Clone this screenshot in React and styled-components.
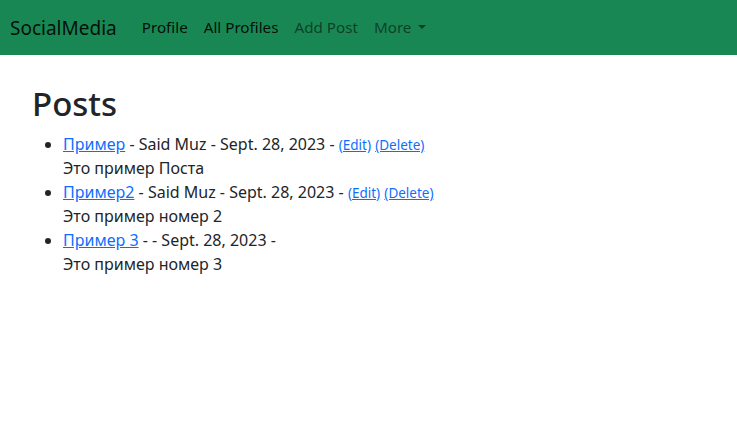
import React from 'react';
import styled, { createGlobalStyle } from 'styled-components';

const GlobalStyle = createGlobalStyle`
  body {
    margin: 0;
    font-family: "Noto Sans", "Open Sans", sans-serif;
    font-size: 16px;
    line-height: 1.5;
    color: #212529;
    background: #fff;
  }
`;

const Navbar = styled.nav`
  display: flex;
  align-items: center;
  height: 55px;
  padding: 0 10px;
  background-color: #198754;
`;

const Brand = styled.a`
  font-size: 19px;
  line-height: 30px;
  color: rgba(0, 0, 0, 0.9);
  text-decoration: none;
  margin-right: 17px;
`;

const NavList = styled.ul`
  display: flex;
  list-style: none;
  margin: 0;
  padding: 0;
`;

const NavLink = styled.a`
  display: block;
  padding: 8px;
  font-size: 15.2px;
  color: ${p => (p.$active ? 'rgba(0, 0, 0, 0.9)' : 'rgba(0, 0, 0, 0.55)')};
  text-decoration: none;
  cursor: pointer;

  &.dropdown::after {
    content: '';
    display: inline-block;
    margin-left: 7px;
    vertical-align: 0.255em;
    border-top: 0.3em solid;
    border-right: 0.3em solid transparent;
    border-left: 0.3em solid transparent;
  }
`;

const Main = styled.main`
  padding: 29px 32px 0;
`;

const Title = styled.h1`
  margin: 0 0 8px;
  font-size: 33px;
  font-weight: 500;
  line-height: 1.2;
`;

const PostList = styled.ul`
  margin: 0;
  padding-left: 31px;
`;

const PostItem = styled.li``;

const Link = styled.a`
  color: #0d6efd;
  text-decoration: underline;
`;

const SmallLink = styled(Link)`
  font-size: 13.5px;
`;

const Body = styled.div``;

const posts = [
  { title: 'Пример', author: 'Said Muz', date: 'Sept. 28, 2023', text: 'Это пример Поста', own: true },
  { title: 'Пример2', author: 'Said Muz', date: 'Sept. 28, 2023', text: 'Это пример номер 2', own: true },
  { title: 'Пример 3', author: '', date: 'Sept. 28, 2023', text: 'Это пример номер 3', own: false },
];

export default function App() {
  return (
    <>
      <GlobalStyle />
      <Navbar>
        <Brand href="#">SocialMedia</Brand>
        <NavList>
          <li><NavLink $active href="#">Profile</NavLink></li>
          <li><NavLink $active href="#">All Profiles</NavLink></li>
          <li><NavLink href="#">Add Post</NavLink></li>
          <li><NavLink className="dropdown" href="#">More</NavLink></li>
        </NavList>
      </Navbar>
      <Main>
        <Title>Posts</Title>
        <PostList>
          {posts.map(post => (
            <PostItem key={post.title}>
              <Link href="#">{post.title}</Link> - {post.author} - {post.date} -
              {post.own && (
                <>
                  {' '}<SmallLink href="#">(Edit)</SmallLink>{' '}
                  <SmallLink href="#">(Delete)</SmallLink>
                </>
              )}
              <Body>{post.text}</Body>
            </PostItem>
          ))}
        </PostList>
      </Main>
    </>
  );
}
